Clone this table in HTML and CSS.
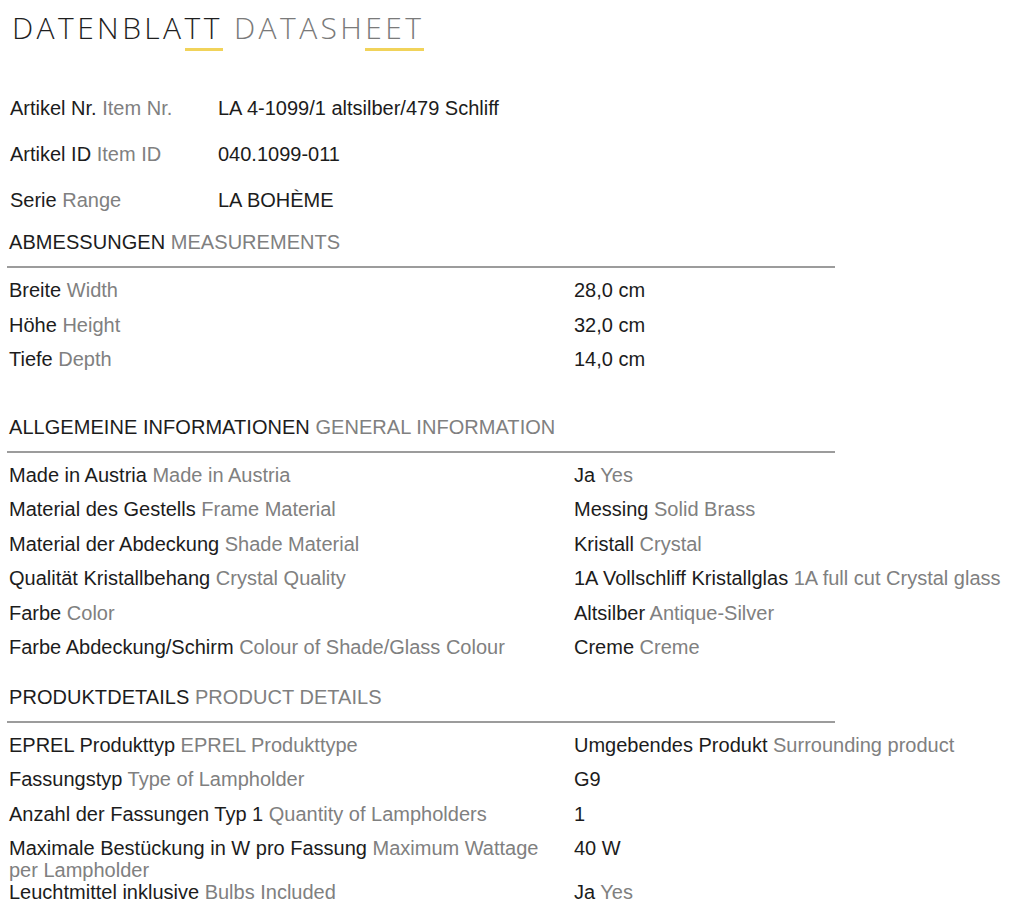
FILE: index.html
```html
<!DOCTYPE html>
<html lang="de">
<head>
<meta charset="utf-8">
<title>Datenblatt Datasheet</title>
<link rel="stylesheet" href="styles.css">
</head>
<body>
<div class="page">
  <h1 class="title">DATENBLA<span class="hl">TT</span> <span class="en">DATASH<span class="hl">EET</span></span></h1>

  <div class="ident">
    <div class="ident-row"><div class="lbl">Artikel Nr. <span class="en">Item Nr.</span></div><div class="val">LA 4-1099/1 altsilber/479 Schliff</div></div>
    <div class="ident-row"><div class="lbl">Artikel ID <span class="en">Item ID</span></div><div class="val">040.1099-011</div></div>
    <div class="ident-row"><div class="lbl">Serie <span class="en">Range</span></div><div class="val">LA BOHÈME</div></div>
  </div>

  <section class="section s-measure">
    <h2 class="section-head">ABMESSUNGEN <span class="en">MEASUREMENTS</span></h2>
    <div class="rows">
      <div class="row"><div class="lbl">Breite <span class="en">Width</span></div><div class="val">28,0 cm</div></div>
      <div class="row"><div class="lbl">Höhe <span class="en">Height</span></div><div class="val">32,0 cm</div></div>
      <div class="row"><div class="lbl">Tiefe <span class="en">Depth</span></div><div class="val">14,0 cm</div></div>
    </div>
  </section>

  <section class="section s-general">
    <h2 class="section-head">ALLGEMEINE INFORMATIONEN <span class="en">GENERAL INFORMATION</span></h2>
    <div class="rows">
      <div class="row"><div class="lbl">Made in Austria <span class="en">Made in Austria</span></div><div class="val">Ja <span class="en">Yes</span></div></div>
      <div class="row"><div class="lbl">Material des Gestells <span class="en">Frame Material</span></div><div class="val">Messing <span class="en">Solid Brass</span></div></div>
      <div class="row"><div class="lbl">Material der Abdeckung <span class="en">Shade Material</span></div><div class="val">Kristall <span class="en">Crystal</span></div></div>
      <div class="row"><div class="lbl">Qualität Kristallbehang <span class="en">Crystal Quality</span></div><div class="val">1A Vollschliff Kristallglas <span class="en">1A full cut Crystal glass</span></div></div>
      <div class="row"><div class="lbl">Farbe <span class="en">Color</span></div><div class="val">Altsilber <span class="en">Antique-Silver</span></div></div>
      <div class="row"><div class="lbl">Farbe Abdeckung/Schirm <span class="en">Colour of Shade/Glass Colour</span></div><div class="val">Creme <span class="en">Creme</span></div></div>
    </div>
  </section>

  <section class="section s-product">
    <h2 class="section-head">PRODUKTDETAILS <span class="en">PRODUCT DETAILS</span></h2>
    <div class="rows">
      <div class="row"><div class="lbl">EPREL Produkttyp <span class="en">EPREL Produkttype</span></div><div class="val">Umgebendes Produkt <span class="en">Surrounding product</span></div></div>
      <div class="row"><div class="lbl">Fassungstyp <span class="en">Type of Lampholder</span></div><div class="val">G9</div></div>
      <div class="row"><div class="lbl">Anzahl der Fassungen Typ 1 <span class="en">Quantity of Lampholders</span></div><div class="val">1</div></div>
      <div class="row"><div class="lbl">Maximale Bestückung in W pro Fassung <span class="en">Maximum Wattage per Lampholder</span></div><div class="val">40 W</div></div>
      <div class="row"><div class="lbl">Leuchtmittel inklusive <span class="en">Bulbs Included</span></div><div class="val">Ja <span class="en">Yes</span></div></div>
    </div>
  </section>
</div>
</body>
</html>
```

FILE: styles.css
```css
html, body {
  margin: 0;
  padding: 0;
  background: #ffffff;
}

body {
  font-family: "Liberation Sans", Arial, sans-serif;
  font-size: 20px;
  color: #1c1c1c;
}

.page {
  padding: 0 0 0 9px;
}

.en {
  color: #808080;
}

.title {
  margin: 8px 0 0 3px;
  font-family: "Open Sans", "Liberation Sans", sans-serif;
  font-weight: 300;
  font-size: 30px;
  line-height: 40px;
  letter-spacing: 3.4px;
  color: #1f1f1f;
}

.title .en {
  color: #7a7a7a;
}

.title .hl {
  border-bottom: 3px solid #f1d35a;
}

.ident {
  margin-top: 37px;
}

.ident-row {
  display: grid;
  grid-template-columns: 208px 1fr;
  height: 46px;
  line-height: 46px;
  padding-left: 1px;
}

.section-head {
  margin: 0 0 0 -2px;
  padding: 0 0 12px 2px;
  width: 826px;
  font-size: 20px;
  font-weight: normal;
  line-height: 24px;
  letter-spacing: 0.05px;
  border-bottom: 2px solid #9c9c9c;
  color: #1c1c1c;
}

.s-measure { margin-top: 7px; }
.s-general { margin-top: 32px; }
.s-product { margin-top: 14px; }

.rows {
  padding-top: 11px;
}

.row {
  display: grid;
  grid-template-columns: 555px 1fr;
  column-gap: 10px;
  min-height: 34.5px;
  line-height: 22px;
  align-items: start;
}
```
